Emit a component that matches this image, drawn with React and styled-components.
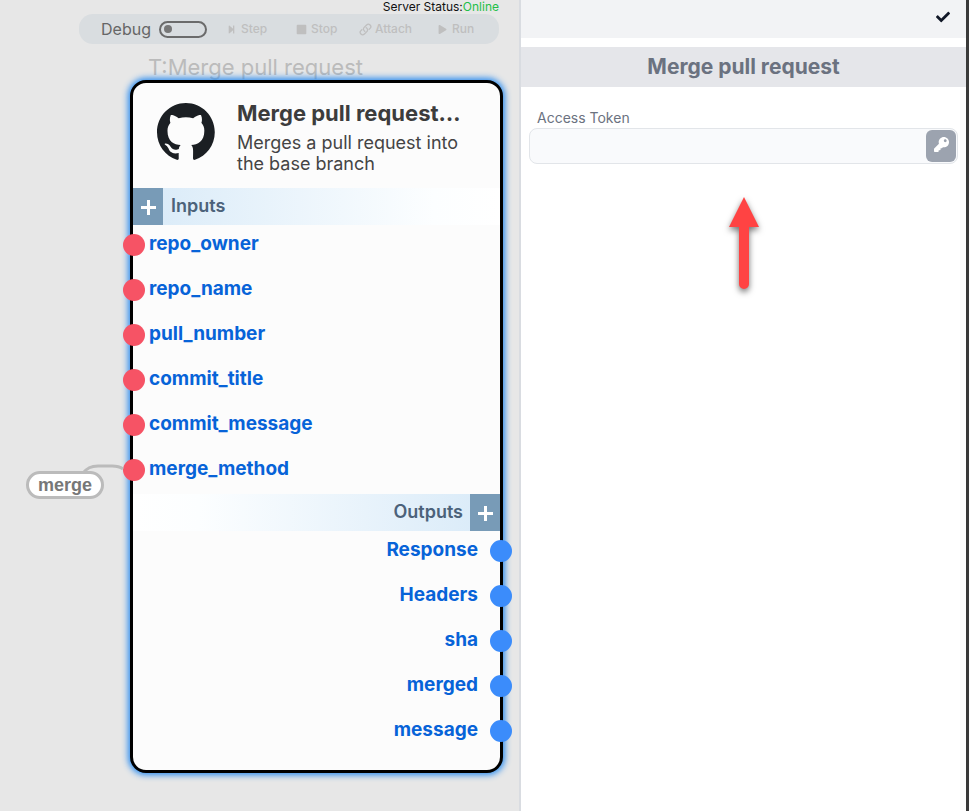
import React from "react";
import styled, { createGlobalStyle, css } from "styled-components";
import { FaCheck, FaKey, FaPlay, FaStepForward, FaStop } from "react-icons/fa";

const GlobalStyle = createGlobalStyle`
  *, *::before, *::after { box-sizing: border-box; }
  body { margin: 0; background: #fff; font-family: Inter, "Liberation Sans", sans-serif; }
  button, input { font: inherit; }
`;

const Shell = styled.div`
  display: grid;
  grid-template-columns: minmax(512px, 521fr) minmax(320px, 448fr);
  min-height: 100vh;
`;

const Canvas = styled.main`
  position: relative;
  display: flex;
  flex-direction: column;
  align-items: flex-end;
  padding-right: 20px;
  background: #e7e7e7;
  border-right: 2px solid #d9dce1;
`;

const Status = styled.p`
  margin: 0;
  font-size: 12px;
  line-height: 14px;
  color: #111;
`;

const Online = styled.span`
  color: #1fbf48;
`;

const Toolbar = styled.div`
  display: flex;
  align-items: center;
  width: 420px;
  height: 30px;
  padding-left: 22px;
  border-radius: 14px;
  background: #d9dde0;
`;

const Switch = styled.label`
  display: flex;
  align-items: center;
  gap: 8px;
  margin-right: 20px;
  font-size: 16px;
  line-height: 18px;
  color: #666;
`;

const SwitchInput = styled.input`
  appearance: none;
  display: flex;
  align-items: center;
  width: 48px;
  height: 17px;
  margin: 0;
  padding: 0 3px;
  border: 2px solid #6b6b6b;
  border-radius: 9px;

  &::before {
    content: "";
    width: 8px;
    height: 8px;
    border-radius: 50%;
    background: #777;
  }
  &:checked { justify-content: flex-end; }
`;

const ToolButton = styled.button`
  display: flex;
  align-items: center;
  gap: ${(p) => p.$gap || 4}px;
  width: ${(p) => p.$width}px;
  padding: 0;
  border: 0;
  background: none;
  font-size: 12px;
  font-weight: 500;
  line-height: 16px;
  color: #bfbfbf;
`;

const Node = styled.article`
  position: absolute;
  left: 130px;
  top: 80px;
  width: 373px;
  border: 3px solid #000;
  border-radius: 16px;
  background: #fcfcfc;
  box-shadow: 0 0 6px 2px #2a8cf0;
`;

const NodeTag = styled.div`
  position: absolute;
  left: 148px;
  top: 53px;
  font-size: 22px;
  line-height: 28px;
  color: #bbb;
`;

const NodeHeader = styled.header`
  display: grid;
  grid-template-columns: 58px 1fr;
  column-gap: 22px;
  height: 105px;
  padding: 17px 20px 0 24px;
`;

const Logo = styled.svg`
  width: 58px;
  height: 57px;
  margin-top: 3px;
  fill: #1b1f23;
`;

const NodeTitle = styled.h2`
  margin: 0 0 5px;
  font-size: 22px;
  font-weight: 700;
  line-height: 27px;
  color: #3c3c3c;
`;

const NodeText = styled.p`
  margin: 0;
  font-size: 18px;
  line-height: 21px;
  color: #444;
`;

const Band = styled.div`
  display: flex;
  flex-direction: ${(p) => (p.$out ? "row-reverse" : "row")};
  gap: ${(p) => (p.$out ? 7 : 8)}px;
  height: 37px;
  background: linear-gradient(${(p) => (p.$out ? "to left" : "to right")}, #d8eaf8, #fcfeff 82%, #fff);
  font-size: 18px;
  font-weight: 600;
  line-height: 36px;
  color: #4c627a;
`;

const AddButton = styled.button`
  display: grid;
  place-items: center;
  width: 30px;
  height: 37px;
  padding: 2px 0 0;
  border: 0;
  background: #789bb7;
  color: #fff;
`;

const Ports = styled.ul`
  display: flex;
  flex-direction: column;
  gap: 23px;
  margin: 0;
  padding: 9px 0 ${(p) => (p.$out ? 28 : 13)}px;
  list-style: none;
`;

const Port = styled.li`
  display: flex;
  align-items: center;
  gap: ${(p) => (p.$out ? 12 : 4)}px;
  height: 22px;
  font-size: 19px;
  font-weight: 700;
  color: #0763d8;
  ${(p) => p.$out
    ? css`flex-direction: row-reverse; margin-right: -12px;`
    : css`margin-left: -10px;`}
`;

const PortLabel = styled.span`
  line-height: 20px;
  padding-bottom: 2px;
`;

const Dot = styled.i`
  width: 22px;
  height: 22px;
  flex: none;
  border-radius: 50%;
  background: ${(p) => (p.$out ? "#3b8cfb" : "#f65365")};
`;

const Wire = styled.svg`
  position: absolute;
  left: 80px;
  top: 460px;
`;

const ValuePill = styled.div`
  position: absolute;
  left: 26px;
  top: 471px;
  padding: 1px 9px 0;
  border: 3px solid #bbb;
  border-radius: 14px;
  background: #fff;
  font: bold 18px/21px "Liberation Sans", sans-serif;
  color: #777;
`;

const Panel = styled.aside`
  position: relative;
  border-right: 3px solid #3a3a3a;
  background: #fff;
`;

const PanelBar = styled.div`
  display: flex;
  justify-content: flex-end;
  height: 38px;
  padding: 10px 16px 0;
  background: #f2f3f5;
`;

const ConfirmButton = styled.button`
  height: 14px;
  padding: 0;
  border: 0;
  background: none;
  color: #111827;
  line-height: 0;
`;

const PanelTitle = styled.h1`
  margin: 9px 0 0;
  font-size: 21px;
  font-weight: 700;
  line-height: 40px;
  text-align: center;
  color: #6b7280;
  background: #e5e6ea;
`;

const Field = styled.div`
  padding: 21px 8px 0;
`;

const FieldLabel = styled.label`
  display: block;
  padding-left: 8px;
  font-size: 14px;
  line-height: 20px;
  color: #6b7280;
`;

const FieldBox = styled.div`
  display: flex;
  height: 36px;
  padding: 1px;
  border: 1px solid #e2e5e9;
  border-radius: 8px;
  background: #f9fafc;
`;

const TokenInput = styled.input`
  flex: 1;
  min-width: 0;
  padding: 0 8px;
  border: 0;
  outline: 0;
  background: none;
  font-size: 14px;
`;

const KeyButton = styled.button`
  width: 30px;
  height: 32px;
  padding: 0 0 3px;
  border: 0;
  border-radius: 6px;
  background: #9ca3af;
  color: #fff;
  line-height: 0;
`;

const Pointer = styled.svg`
  position: absolute;
  left: calc(50% - 22px);
  top: 190px;
  filter: drop-shadow(0 3px 3px rgba(0, 0, 0, 0.55));
`;

const inputs = ["repo_owner", "repo_name", "pull_number", "commit_title", "commit_message", "merge_method"];
const outputs = ["Response", "Headers", "sha", "merged", "message"];

function Plus() {
  return (
    <svg width="15" height="15" viewBox="0 0 15 15" stroke="currentColor" strokeWidth="3">
      <path d="M7.5 0v15M0 7.5h15" />
    </svg>
  );
}

function LinkIcon() {
  return (
    <svg width="13" height="13" viewBox="0 0 24 24" fill="none" stroke="currentColor" strokeWidth="2.4" strokeLinecap="round" strokeLinejoin="round">
      <path d="M13.19 8.688a4.5 4.5 0 0 1 1.242 7.244l-4.5 4.5a4.5 4.5 0 0 1-6.364-6.364l1.757-1.757m13.35-.622 1.757-1.757a4.5 4.5 0 0 0-6.364-6.364l-4.5 4.5a4.5 4.5 0 0 0 1.242 7.244" />
    </svg>
  );
}

function Section({ title, ports, out }) {
  return (
    <section>
      <Band $out={out}>
        <AddButton type="button" aria-label={`Add to ${title}`}><Plus /></AddButton>
        <span>{title}</span>
      </Band>
      <Ports $out={out}>
        {ports.map((name) => (
          <Port key={name} $out={out}>
            <Dot $out={out} />
            <PortLabel>{name}</PortLabel>
          </Port>
        ))}
      </Ports>
    </section>
  );
}

export default function App() {
  return (
    <>
      <GlobalStyle />
      <Shell>
        <Canvas>
          <Status>Server Status:<Online>Online</Online></Status>
          <Toolbar role="toolbar">
            <Switch>
              Debug
              <SwitchInput type="checkbox" role="switch" />
            </Switch>
            <ToolButton type="button" disabled $width={69} $gap={5}><FaStepForward size={9} />Step</ToolButton>
            <ToolButton type="button" disabled $width={63}><FaStop size={11} />Stop</ToolButton>
            <ToolButton type="button" disabled $width={79} $gap={3}><LinkIcon />Attach</ToolButton>
            <ToolButton type="button" disabled $width={50} $gap={5}><FaPlay size={9} />Run</ToolButton>
          </Toolbar>
          <NodeTag>T:Merge pull request</NodeTag>
          <Node>
            <NodeHeader>
              <Logo viewBox="0 0 98 96" role="img" aria-label="GitHub">
                <path d="M48.854 0C21.839 0 0 22 0 49.217c0 21.756 13.993 40.172 33.405 46.69 2.427.49 3.316-1.059 3.316-2.362 0-1.141-.08-5.052-.08-9.127-13.59 2.934-16.42-5.867-16.42-5.867-2.184-5.704-5.42-7.17-5.42-7.17-4.448-3.015.324-3.015.324-3.015 4.934.326 7.523 5.052 7.523 5.052 4.367 7.496 11.404 5.378 14.235 4.074.404-3.178 1.699-5.378 3.074-6.6-10.839-1.141-22.243-5.378-22.243-24.283 0-5.378 1.94-9.778 5.014-13.2-.485-1.222-2.184-6.275.486-13.038 0 0 4.125-1.304 13.426 5.052a46.97 46.97 0 0 1 12.214-1.63c4.125 0 8.33.571 12.213 1.63 9.302-6.356 13.427-5.052 13.427-5.052 2.67 6.763.97 11.816.485 13.038 3.155 3.422 5.015 7.822 5.015 13.2 0 18.905-11.404 23.06-22.324 24.283 1.78 1.548 3.316 4.481 3.316 9.126 0 6.6-.08 11.897-.08 13.526 0 1.304.89 2.853 3.316 2.364 19.412-6.52 33.405-24.935 33.405-46.691C97.707 22 75.788 0 48.854 0z" />
              </Logo>
              <div>
                <NodeTitle>Merge pull request…</NodeTitle>
                <NodeText>Merges a pull request into the base branch</NodeText>
              </div>
            </NodeHeader>
            <Section title="Inputs" ports={inputs} />
            <Section title="Outputs" ports={outputs} out />
          </Node>
          <Wire width="46" height="16" fill="none" stroke="#bbb" strokeWidth="3">
            <path d="M2 14C7 8 11 6 18 6h14c4 0 7 0 11 3" />
          </Wire>
          <ValuePill>merge</ValuePill>
        </Canvas>
        <Panel>
          <PanelBar>
            <ConfirmButton type="button" aria-label="Confirm"><FaCheck size={14} /></ConfirmButton>
          </PanelBar>
          <PanelTitle>Merge pull request</PanelTitle>
          <Field>
            <FieldLabel htmlFor="access-token">Access Token</FieldLabel>
            <FieldBox>
              <TokenInput id="access-token" type="text" />
              <KeyButton type="button" aria-label="Choose key"><FaKey size={15} /></KeyButton>
            </FieldBox>
          </Field>
          <Pointer width="44" height="106" viewBox="0 0 44 106" fill="#ff4343" aria-hidden="true">
            <path d="M22 7l15 30H27v57a5 5 0 0 1-10 0V37H7z" />
          </Pointer>
        </Panel>
      </Shell>
    </>
  );
}
